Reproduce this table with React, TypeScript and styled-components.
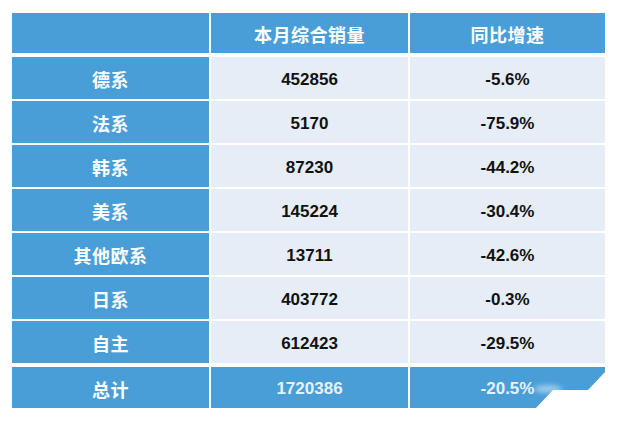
import React from "react";
import styled, { createGlobalStyle } from "styled-components";

const rows = [
  { name: "德系", sales: "452856", growth: "-5.6%" },
  { name: "法系", sales: "5170", growth: "-75.9%" },
  { name: "韩系", sales: "87230", growth: "-44.2%" },
  { name: "美系", sales: "145224", growth: "-30.4%" },
  { name: "其他欧系", sales: "13711", growth: "-42.6%" },
  { name: "日系", sales: "403772", growth: "-0.3%" },
  { name: "自主", sales: "612423", growth: "-29.5%" },
];

const App: React.FC = () => {
  return (
    <>
      <GlobalStyle />
      <Page>
        <Table>
          <HeaderRow>
            <Cell $tone="blue" />
            <Cell $tone="blue">
              <Label>本月综合销量</Label>
            </Cell>
            <Cell $tone="blue">
              <Label>同比增速</Label>
            </Cell>
          </HeaderRow>
          <Body>
            {rows.map((r) => (
              <Row key={r.name}>
                <Cell $tone="blue">
                  <Label>{r.name}</Label>
                </Cell>
                <Cell $tone="light">
                  <Num>{r.sales}</Num>
                </Cell>
                <Cell $tone="light">
                  <Num>{r.growth}</Num>
                </Cell>
              </Row>
            ))}
          </Body>
          <TotalRow>
            <Cell $tone="blue">
              <Label>总计</Label>
            </Cell>
            <Cell $tone="blue">
              <Num $light>1720386</Num>
            </Cell>
            <Cell $tone="blue">
              <Num $light>-20.5%</Num>
              <Cutout viewBox="0 0 195 41" preserveAspectRatio="none">
                <defs>
                  <filter id="soft" x="-50%" y="-100%" width="200%" height="300%">
                    <feGaussianBlur stdDeviation="2.5" />
                  </filter>
                </defs>
                <ellipse cx="138" cy="22" rx="14" ry="4" fill="#dff0fb" opacity="0.55" filter="url(#soft)" />
                <polygon points="196,4 178,23 143,23 125,42 196,42" fill="#ffffff" />
              </Cutout>
            </Cell>
          </TotalRow>
        </Table>
      </Page>
    </>
  );
};

const GlobalStyle = createGlobalStyle`
  html, body {
    margin: 0;
    padding: 0;
    background: #ffffff;
  }
  body {
    font-family: "Liberation Sans", "Noto Sans CJK SC", sans-serif;
  }
`;

const Page = styled.div`
  width: 617px;
  height: 421px;
  padding: 13px 0 0 12px;
  box-sizing: border-box;
  background: #ffffff;
`;

const Table = styled.div`
  display: flex;
  flex-direction: column;
  gap: 4px;
  width: 593px;
`;

const Body = styled.div`
  display: flex;
  flex-direction: column;
  gap: 2px;
`;

const Row = styled.div`
  display: grid;
  grid-template-columns: 197px 197px 195px;
  column-gap: 2px;
  height: 42px;
`;

const HeaderRow = styled(Row)`
  height: 40px;
`;

const TotalRow = styled(Row)`
  height: 41px;
`;

const Cell = styled.div<{ $tone: "blue" | "light" }>`
  position: relative;
  display: flex;
  align-items: center;
  justify-content: center;
  background: ${(p) => (p.$tone === "blue" ? "#4a9ed7" : "#e7edf6")};
  overflow: hidden;
`;

const Label = styled.span`
  font-family: "Noto Sans CJK SC", "Liberation Sans", sans-serif;
  font-weight: 700;
  font-size: 18px;
  line-height: 1;
  padding-top: 2px;
  color: #ffffff;
  letter-spacing: 0.5px;
`;

const Num = styled.span<{ $light?: boolean }>`
  font-family: "Liberation Sans", Arial, sans-serif;
  font-weight: 700;
  font-size: 17px;
  line-height: 1;
  padding-top: 2px;
  color: ${(p) => (p.$light ? "#e6f1fa" : "#111111")};
`;

const Cutout = styled.svg`
  position: absolute;
  inset: 0;
  width: 100%;
  height: 100%;
`;

export default App;
